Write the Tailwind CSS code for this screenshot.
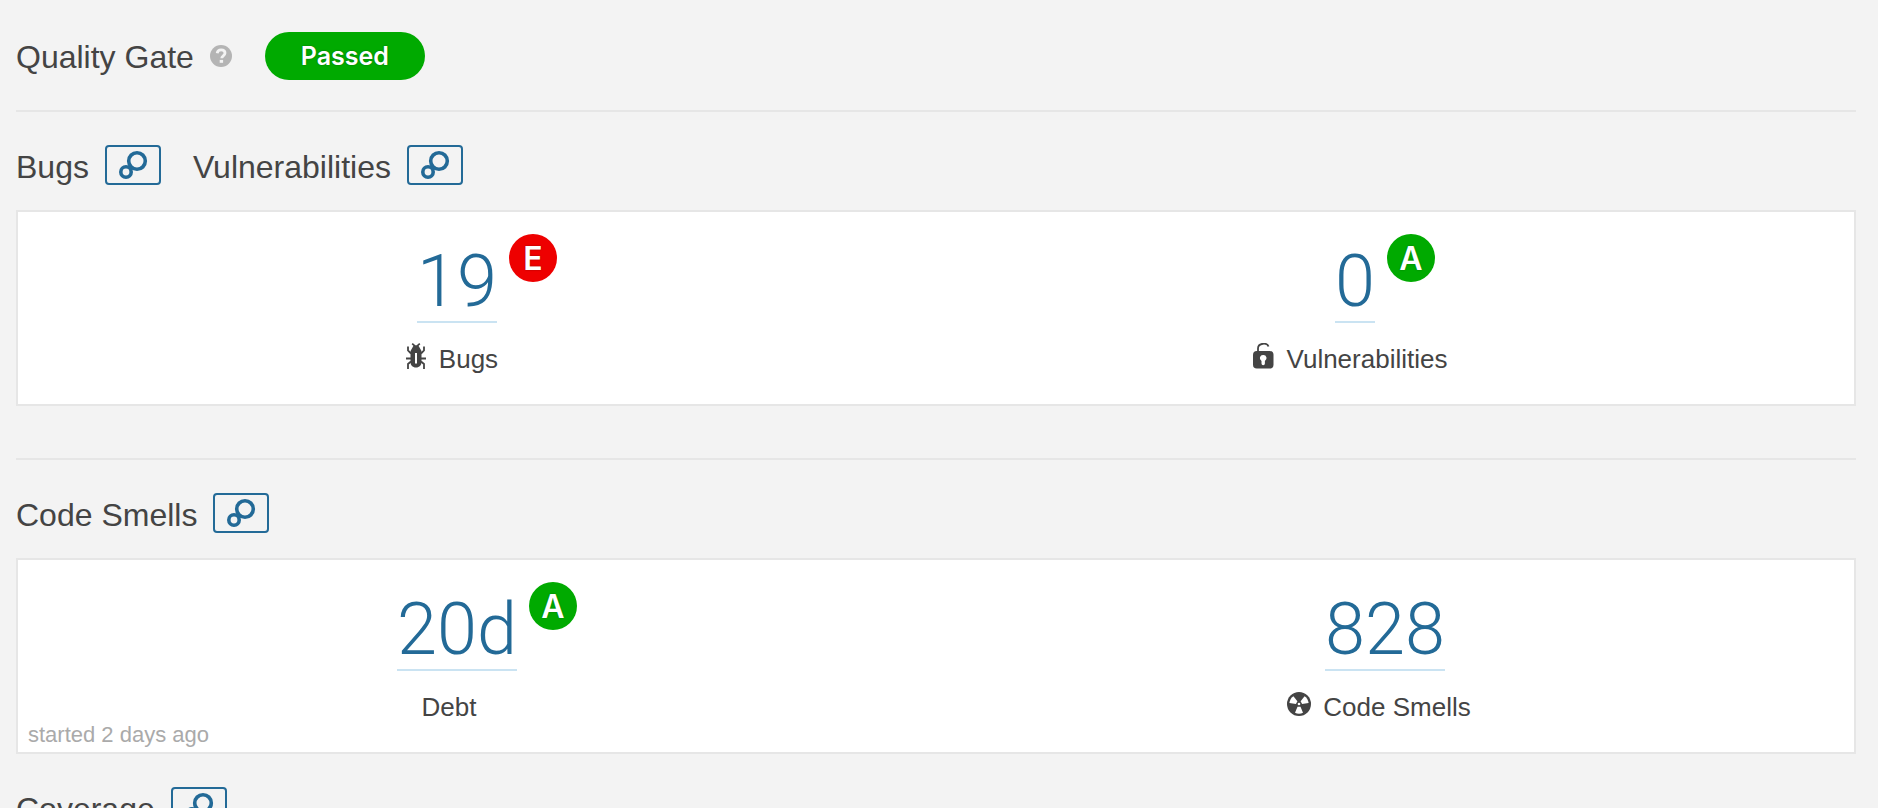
<!DOCTYPE html>
<html lang="en">
<head>
<meta charset="utf-8">
<meta name="viewport" content="width=device-width, initial-scale=1">
<title>Quality Gate</title>
<script src="https://cdn.jsdelivr.net/npm/@tailwindcss/browser@4"></script>
</head>
<body class="h-screen overflow-hidden bg-[#f3f3f3] font-['Liberation_Sans',Arial,sans-serif] text-[#444444] antialiased">
<svg class="hidden" aria-hidden="true">
  <symbol id="leak" viewBox="0 0 30 30">
    <g fill="none" stroke="#236a97" stroke-width="3.6">
      <circle cx="19" cy="11" r="8.3"/>
      <circle cx="8" cy="22" r="5.2"/>
    </g>
  </symbol>
</svg>
<main class="pl-4 pr-[22px]">
  <header class="flex items-center border-b-2 border-[#e6e6e6] pt-8 pb-[30px]">
    <h1 class="pt-0.5 text-[32px] leading-10">Quality Gate</h1>
    <a href="#help" aria-label="Help" class="ml-4">
      <svg class="size-[22px]" viewBox="0 0 22 22"><circle cx="11" cy="11" r="11" fill="#b4b4b4"/><path d="M7.2 8.2C7.5 5.9 9 4.9 11.1 4.9c2.200 0 3.900 1.200 3.900 3.200 0 2.800-3.300 2.700-3.300 5.200" fill="none" stroke="#f3f3f3" stroke-width="2.800"/><rect x="9.700" y="14.900" width="3.400" height="2.900" fill="#f3f3f3"/></svg>
    </a>
    <span class="ml-[33px] flex h-12 w-40 items-center justify-center rounded-full bg-[#00aa00] pt-0.5 font-['Inter',sans-serif] text-[25px] font-semibold text-white [text-shadow:0_0_2px_rgba(0,0,0,0.35)]">Passed</span>
  </header>

  <section class="border-b-2 border-[#e6e6e6] pt-[33px] pb-[52px]">
    <div class="mb-[25px] flex items-center gap-8">
      <div class="flex items-center gap-4">
        <h2 class="pt-1 text-[32px] leading-9">Bugs</h2>
        <button aria-label="Bugs leak" class="flex h-10 w-14 items-center justify-center rounded-[4px] border-2 border-[#236a97]"><svg class="size-[30px]"><use href="#leak"/></svg></button>
      </div>
      <div class="flex items-center gap-4">
        <h2 class="pt-1 text-[32px] leading-9">Vulnerabilities</h2>
        <button aria-label="Vulnerabilities leak" class="flex h-10 w-14 items-center justify-center rounded-[4px] border-2 border-[#236a97]"><svg class="size-[30px]"><use href="#leak"/></svg></button>
      </div>
    </div>
    <div class="grid grid-cols-2 border-2 border-[#e6e6e6] bg-white px-5 pt-[22px] pb-[29px]">
      <div>
        <div class="flex items-start justify-center gap-3">
          <a href="#bugs" class="mt-2 border-b-2 border-[#cae3f2] font-['Roboto',sans-serif] text-[72px] leading-[79px] font-light text-[#236a97]">19</a>
          <span class="flex size-12 items-center justify-center rounded-full bg-[#ee0000] pt-0.5 font-['Inter',sans-serif] text-[32px] font-semibold text-white [text-shadow:0_0_2px_rgba(0,0,0,0.35)]">E</span>
        </div>
        <div class="mt-5 flex justify-center gap-3 pr-[70px] text-[26px] leading-8">
          <svg class="h-[26px] w-[21px]" viewBox="0 0 21 26" fill="none" stroke="#444444" stroke-width="1.800"><path d="M6.200.7 9 3.200M13.800.7 11 3.200M2 3.500v4L5 10.500M18 3.500v4L15 10.500M0 15.500h5M20 15.500h-5M5 18.500l-3 2.500v5M15 18.500l3 2.500v5"/><path fill="#444444" stroke="none" d="M6.500 4.500C7 3 8 2.300 10 2.300s3 .7 3.500 2.200L15.500 8v11c0 3-2 5.500-5.500 5.500S4.500 22 4.500 19V8z"/><path stroke="#fff" stroke-width="2" d="M10 10v10.500"/></svg>
          <span>Bugs</span>
        </div>
      </div>
      <div>
        <div class="flex items-start justify-center gap-3">
          <a href="#vulnerabilities" class="mt-2 border-b-2 border-[#cae3f2] font-['Roboto',sans-serif] text-[72px] leading-[79px] font-light text-[#236a97]">0</a>
          <span class="flex size-12 items-center justify-center rounded-full bg-[#00aa00] pt-0.5 font-['Inter',sans-serif] text-[32px] font-semibold text-white [text-shadow:0_0_2px_rgba(0,0,0,0.35)]">A</span>
        </div>
        <div class="mt-5 flex justify-center gap-3 pr-[70px] text-[26px] leading-8">
          <svg class="h-[27px] w-[22px]" viewBox="0 0 22 27"><rect x="0" y="8" width="20.500" height="17.500" rx="3.800" fill="#444444"/><path d="M5 9V5.500c0-6 9.500-6 10.500-2" fill="none" stroke="#444444" stroke-width="1.800"/><path d="M10.200 12a3.200 3.200 0 0 1 1.700 6v2.600a1.700 1.700 0 0 1-3.400 0V18a3.200 3.200 0 0 1 1.700-6z" fill="#fff"/></svg>
          <span>Vulnerabilities</span>
        </div>
      </div>
    </div>
  </section>

  <section class="pt-[33px]">
    <div class="mb-[25px] flex items-center gap-4">
      <h2 class="pt-1 text-[32px] leading-9">Code Smells</h2>
      <button aria-label="Code Smells leak" class="flex h-10 w-14 items-center justify-center rounded-[4px] border-2 border-[#236a97]"><svg class="size-[30px]"><use href="#leak"/></svg></button>
    </div>
    <div class="relative grid grid-cols-2 border-2 border-[#e6e6e6] bg-white px-5 pt-[22px] pb-[29px]">
      <div>
        <div class="flex items-start justify-center gap-3">
          <a href="#debt" class="mt-2 border-b-2 border-[#cae3f2] font-['Roboto',sans-serif] text-[72px] leading-[79px] font-light text-[#236a97]">20d</a>
          <span class="flex size-12 items-center justify-center rounded-full bg-[#00aa00] pt-0.5 font-['Inter',sans-serif] text-[32px] font-semibold text-white [text-shadow:0_0_2px_rgba(0,0,0,0.35)]">A</span>
        </div>
        <div class="mt-5 flex justify-center pr-[76px] text-[26px] leading-8">Debt</div>
      </div>
      <div>
        <div class="flex items-start justify-center gap-3">
          <a href="#smells" class="mt-2 border-b-2 border-[#cae3f2] font-['Roboto',sans-serif] text-[72px] leading-[79px] font-light text-[#236a97]">828</a>
        </div>
        <div class="mt-5 flex justify-center gap-3 pr-3 text-[26px] leading-8">
          <svg class="mt-px size-6" viewBox="0 0 24 24"><circle cx="12" cy="12" r="12" fill="#444444"/><g fill="#fff"><path id="blade" d="M10.500 14.700h3L16 20.800c-2.500 1.200-5.500 1.200-8 0z"/><use href="#blade" transform="rotate(120 12 12)"/><use href="#blade" transform="rotate(240 12 12)"/><circle cx="12" cy="12" r="1.300"/></g></svg>
          <span>Code Smells</span>
        </div>
      </div>
      <p class="absolute bottom-[3px] left-[10px] text-[22px] leading-7 text-[#aaaaaa]">started 2 days ago</p>
    </div>
  </section>

  <section class="pt-[33px]">
    <div class="flex items-center gap-4">
      <h2 class="pt-1 text-[32px] leading-9">Coverage</h2>
      <button aria-label="Coverage leak" class="flex h-10 w-14 items-center justify-center rounded-[4px] border-2 border-[#236a97]"><svg class="size-[30px]"><use href="#leak"/></svg></button>
    </div>
  </section>
</main>
</body>
</html>
